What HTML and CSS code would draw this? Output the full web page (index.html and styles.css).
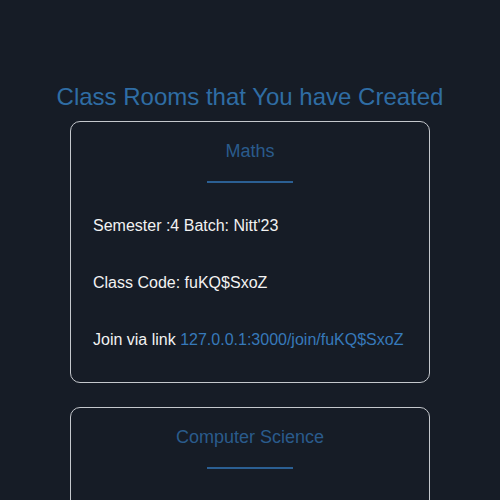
FILE: index.html
```html
<!DOCTYPE html>
<html>
<head>
<meta charset="utf-8">
<link rel="stylesheet" href="styles.css">
</head>
<body>
<main class="page">
  <h1 class="page-title">Class Rooms that You have Created</h1>
  <section class="card">
    <h2 class="card-title">Maths</h2>
    <hr class="divider">
    <p class="line">Semester :4 Batch: Nitt'23</p>
    <p class="line">Class Code: fuKQ$SxoZ</p>
    <p class="line">Join via link <a class="link" href="#">127.0.0.1:3000/join/fuKQ$SxoZ</a></p>
  </section>
  <section class="card">
    <h2 class="card-title">Computer Science</h2>
    <hr class="divider">
    <p class="line">Semester :4 Batch: Nitt'23</p>
    <p class="line">Class Code: abCD$EfgH</p>
    <p class="line">Join via link <a class="link" href="#">127.0.0.1:3000/join/abCD$EfgH</a></p>
  </section>
</main>
</body>
</html>
```
FILE: styles.css
```css
html, body {
  margin: 0;
  padding: 0;
  background: #161c26;
}
body {
  font-family: "Liberation Sans", Arial, sans-serif;
  color: #f2f2f2;
}
.page {
  display: flex;
  flex-direction: column;
  align-items: center;
  padding-top: 83px;
}
.page-title {
  margin: 0 0 10px;
  font-size: 24px;
  line-height: 28px;
  font-weight: normal;
  color: #2f6da4;
  text-align: center;
}
.card {
  box-sizing: border-box;
  width: 360px;
  border: 1px solid #c4c7cc;
  border-radius: 10px;
  padding: 17px 22px 33px;
  margin-bottom: 24px;
}
.card-title {
  margin: 0;
  font-size: 18px;
  line-height: 24px;
  font-weight: normal;
  color: #2a5b8c;
  text-align: center;
}
.divider {
  width: 86px;
  height: 2px;
  border: 0;
  background: #2b5f93;
  margin: 18px auto 34px;
}
.line {
  margin: 0 0 39px;
  font-size: 16px;
  line-height: 18px;
}
.line:last-child {
  margin-bottom: 0;
}
.link {
  color: #3679ba;
  text-decoration: none;
}
```
